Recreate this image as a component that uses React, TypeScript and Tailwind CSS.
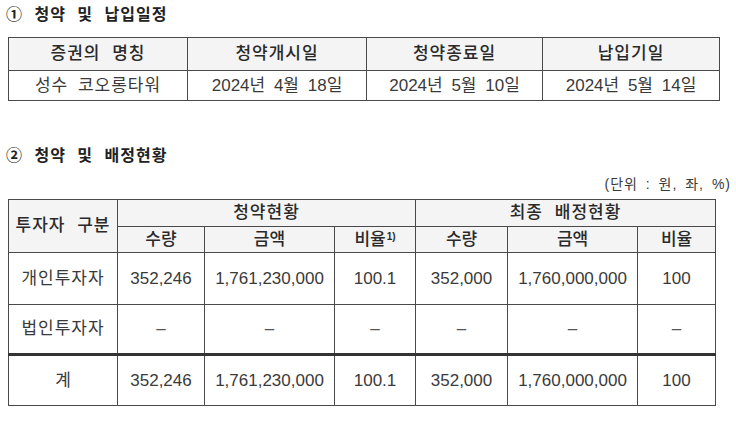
export default function App() {
  const cell = "border border-[#4a4a4a] text-center align-middle"
  const head = "border border-[#4a4a4a] bg-[#f4f4f4] text-center align-middle font-medium text-[#2a2a2a]"
  const dash = cell + " text-[#555]"

  return (
    <div
      className="h-[425px] w-[736px] bg-white pl-[8px] text-[#3a3a3a]"
      style={{ fontFamily: '"Liberation Sans", "Noto Sans CJK KR", sans-serif' }}
    >
      {/* 1. schedule */}
      <h2 className="ml-[-2px] pt-[5px] text-[16px] font-bold leading-[20px] tracking-[1px] [word-spacing:6px] text-[#222]">
        ① 청약 및 납입일정
      </h2>
      <table className="mt-[12px] w-[711px] table-fixed border-collapse text-[17px]">
        <colgroup>
          <col className="w-[179px]" />
          <col className="w-[179px]" />
          <col className="w-[176px]" />
          <col className="w-[177px]" />
        </colgroup>
        <thead>
          <tr className="h-[33px]">
            <th className={head + " tracking-[1px] [word-spacing:6px]"}>증권의 명칭</th>
            <th className={head + " tracking-[1px]"}>청약개시일</th>
            <th className={head + " tracking-[1px]"}>청약종료일</th>
            <th className={head + " tracking-[1px]"}>납입기일</th>
          </tr>
        </thead>
        <tbody>
          <tr className="h-[30px]">
            <td className={cell + " tracking-[1px] [word-spacing:4px]"}>성수 코오롱타워</td>
            <td className={cell + " [word-spacing:4px]"}>2024년 4월 18일</td>
            <td className={cell + " [word-spacing:4px]"}>2024년 5월 10일</td>
            <td className={cell + " [word-spacing:4px]"}>2024년 5월 14일</td>
          </tr>
        </tbody>
      </table>

      {/* 2. allocation */}
      <h2 className="ml-[-2px] mt-[45px] text-[16px] font-bold leading-[20px] tracking-[1px] [word-spacing:6px] text-[#222]">
        ② 청약 및 배정현황
      </h2>
      <div className="mt-[9px] flex w-[723px] justify-end text-[14px] leading-[18px] tracking-[1px] [word-spacing:3px]">
        (단위 : 원, 좌, %)
      </div>
      <table className="mt-[6px] w-[707px] table-fixed border-collapse text-[17px]">
        <colgroup>
          <col className="w-[109px]" />
          <col className="w-[87px]" />
          <col className="w-[130px]" />
          <col className="w-[81px]" />
          <col className="w-[92px]" />
          <col className="w-[130px]" />
          <col className="w-[78px]" />
        </colgroup>
        <thead>
          <tr className="h-[26px]">
            <th rowSpan={2} className={head + " tracking-[1px] [word-spacing:6px]"}>
              투자자 구분
            </th>
            <th colSpan={3} className={head + " tracking-[1px]"}>청약현황</th>
            <th colSpan={3} className={head + " tracking-[1px] [word-spacing:6px]"}>최종 배정현황</th>
          </tr>
          <tr className="h-[24px]">
            <th className={head}>수량</th>
            <th className={head}>금액</th>
            <th className={head}>
              비율<sup className="ml-[1px] text-[10px] font-bold">1)</sup>
            </th>
            <th className={head}>수량</th>
            <th className={head}>금액</th>
            <th className={head}>비율</th>
          </tr>
        </thead>
        <tbody>
          <tr className="h-[52px]">
            <td className={cell + " tracking-[1px]"}>개인투자자</td>
            <td className={cell}>352,246</td>
            <td className={cell}>1,761,230,000</td>
            <td className={cell}>100.1</td>
            <td className={cell}>352,000</td>
            <td className={cell}>1,760,000,000</td>
            <td className={cell}>100</td>
          </tr>
          <tr className="h-[50px] border-b-[3px] border-b-[#333]">
            <td className={cell + " tracking-[1px]"}>법인투자자</td>
            <td className={dash}>–</td>
            <td className={dash}>–</td>
            <td className={dash}>–</td>
            <td className={dash}>–</td>
            <td className={dash}>–</td>
            <td className={dash}>–</td>
          </tr>
          <tr className="h-[51px]">
            <td className={cell}>계</td>
            <td className={cell}>352,246</td>
            <td className={cell}>1,761,230,000</td>
            <td className={cell}>100.1</td>
            <td className={cell}>352,000</td>
            <td className={cell}>1,760,000,000</td>
            <td className={cell}>100</td>
          </tr>
        </tbody>
      </table>
    </div>
  )
}
